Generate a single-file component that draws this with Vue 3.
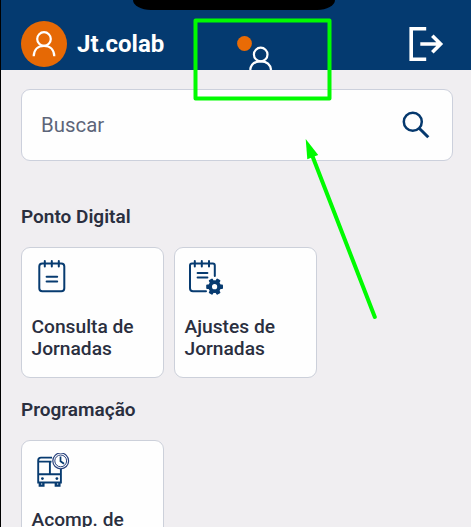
<script setup>
const sections = [
  {
    title: 'Ponto Digital',
    cards: [
      { icon: 'notes', lines: ['Consulta de', 'Jornadas'] },
      { icon: 'notes-gear', lines: ['Ajustes de', 'Jornadas'] },
    ],
  },
  {
    title: 'Programação',
    cards: [{ icon: 'bus', lines: ['Acomp. de'] }],
  },
]
const teeth = [0, 60, 120, 180, 240, 300]
</script>

<template>
  <main class="screen">
    <header class="topbar">
      <span class="avatar">
        <svg width="46" height="46" viewBox="0 0 46 46" fill="none" stroke="#fff" stroke-width="2.2">
          <circle cx="23" cy="18" r="6.8" />
          <path d="M12.7 35.2C12.9 28.5 17 24.8 23 24.8S33.1 28.5 33.3 35.2" />
        </svg>
      </span>
      <span class="user">Jt.colab</span>
      <svg class="logout" width="36" height="36" viewBox="0 0 36 36" fill="none" stroke="#fff" stroke-width="3.6">
        <path d="M18.2 2.8H3.2V33.2H18.2" />
        <path d="M12.3 18H33M24.3 9.7L32.6 18L24.3 26.3" />
      </svg>
      <span class="notch"></span>
    </header>

    <div class="content">
      <div class="search">
        <span>Buscar</span>
        <svg width="28" height="28" viewBox="0 0 28 28" fill="none" stroke="#05386d">
          <circle cx="10.8" cy="10.8" r="9" stroke-width="2.5" />
          <path d="M17.2 17.2L26.3 26.3" stroke-width="3" />
        </svg>
      </div>

      <section v-for="section in sections" :key="section.title" class="group">
        <h2>{{ section.title }}</h2>
        <div class="cards">
          <article v-for="card in section.cards" :key="card.icon" class="card">
            <svg v-if="card.icon === 'notes'" class="icon" width="42" height="36" viewBox="0 0 42 36" fill="none" stroke="#073b70" stroke-width="2" stroke-linecap="round">
              <rect x="7.3" y="3.6" width="25" height="27.6" rx="3" />
              <path d="M12.8 1V6.4M19.8 1V6.4M26.8 1V6.4M14.6 16.8H25.2M14.6 21.6H25.2" />
            </svg>
            <svg v-else-if="card.icon === 'notes-gear'" class="icon" width="42" height="36" viewBox="0 0 42 36" fill="none" stroke="#073b70" stroke-width="2" stroke-linecap="round">
              <path d="M21 31.2H8Q5 31.2 5 28.2V5.6Q5 3.6 7 3.6H27.8Q29.8 3.6 29.8 5.6V16" />
              <path d="M9.8 1V6.4M16.8 1V6.4M24 1V6.4M12.6 13H22.4M12.6 17.6H22.4" />
              <g transform="translate(29.6 26.7)">
                <rect v-for="angle in teeth" :key="angle" x="-2.2" y="-8.4" width="4.4" height="5" rx="0.9" fill="#073b70" stroke="none" :transform="`rotate(${angle + 30})`" />
                <circle r="4.5" stroke-width="3.8" fill="#fff" />
              </g>
            </svg>
            <svg v-else class="icon" width="42" height="36" viewBox="0 0 42 36" fill="none" stroke="#073b70" stroke-width="1.9">
              <path d="M20 4.6H9Q6.2 4.6 6.2 7.4V29.5H28.9V16M6 8.6H19.5M6 21.3H29M17.9 9V21" />
              <path d="M7.8 30V32.6H11.4V30M23.8 30V32.6H27.4V30" stroke-width="2.3" />
              <circle cx="10.4" cy="25.6" r="1.4" fill="#073b70" stroke="none" />
              <circle cx="24.9" cy="25.6" r="1.4" fill="#073b70" stroke="none" />
              <circle cx="28.7" cy="7.9" r="7.9" fill="#fff" stroke="#27407c" stroke-width="1.2" />
              <circle cx="28.7" cy="7.9" r="5.9" stroke="#27407c" stroke-width="1" />
              <path d="M28.5 3.5V8.2L32 10.8" stroke-width="1.7" />
            </svg>
            <p><span v-for="line in card.lines" :key="line">{{ line }}</span></p>
          </article>
        </div>
      </section>
    </div>

    <svg class="annotation" width="471" height="527" viewBox="0 0 471 527" fill="none">
      <circle cx="244.5" cy="43.5" r="7.4" fill="#e96b05" />
      <g stroke="#fff" stroke-width="2.2">
        <circle cx="260.7" cy="54.5" r="6.8" />
        <path d="M250.2 70C250.9 64 255 61.3 260.7 61.3S270.4 64 271.1 70" />
      </g>
      <rect x="195.5" y="20.5" width="134" height="78" stroke="#00fb00" stroke-width="4" stroke-linejoin="round" />
      <path d="M374.8 317L312 155" stroke="#00fb00" stroke-width="4" stroke-linecap="round" />
      <path d="M305.7 139L318.2 155L307.3 159.3Z" fill="#00fb00" />
    </svg>
  </main>
</template>

<style>
body {
  margin: 0;
}
</style>

<style scoped>
.screen {
  position: relative;
  box-sizing: border-box;
  width: 471px;
  height: 527px;
  overflow: hidden;
  border-left: 1px solid #000;
  background: #f0eef1;
  font-family: Roboto, sans-serif;
  color: #2a2f3f;
}
.topbar {
  position: relative;
  box-sizing: border-box;
  height: 70px;
  padding: 18px 27px 0 20px;
  display: flex;
  align-items: center;
  background: #043a70;
}
.avatar {
  width: 46px;
  height: 46px;
  border-radius: 50%;
  background: #e66905;
}
.avatar svg {
  display: block;
}
.user {
  margin-left: 10px;
  color: #fff;
  font-size: 24px;
  font-weight: 700;
  line-height: 28px;
}
.logout {
  margin-left: auto;
}
.notch {
  position: absolute;
  top: 0;
  left: 132px;
  width: 202px;
  height: 10px;
  background: #000;
  border-radius: 0 0 18px 18px / 0 0 10px 10px;
}
.content {
  padding: 19px 18px 0 20px;
}
.search {
  box-sizing: border-box;
  height: 72px;
  padding: 0 22px 0 19px;
  border: 1px solid #ccd0dc;
  border-radius: 9px;
  background: #fefefe;
  display: flex;
  align-items: center;
  justify-content: space-between;
  font-size: 20.4px;
  color: #5d6579;
}
.group {
  padding-top: 20px;
}
.search + .group {
  padding-top: 44px;
}
h2 {
  margin: 0;
  padding-top: 1px;
  font-size: 19px;
  line-height: 22px;
  font-weight: 600;
}
.cards {
  margin-top: 19px;
  display: flex;
  gap: 10px;
}
.card {
  box-sizing: border-box;
  width: 143px;
  height: 131px;
  padding: 12px 9.5px;
  border: 1px solid #ccd0da;
  border-radius: 9px;
  background: #fefefe;
}
.icon {
  display: block;
}
.card p {
  margin: 20px 0 0;
  font-size: 19.2px;
  line-height: 22px;
  font-weight: 500;
}
.card p span {
  display: block;
  white-space: nowrap;
}
.annotation {
  position: absolute;
  top: 0;
  left: -1px;
}
</style>
